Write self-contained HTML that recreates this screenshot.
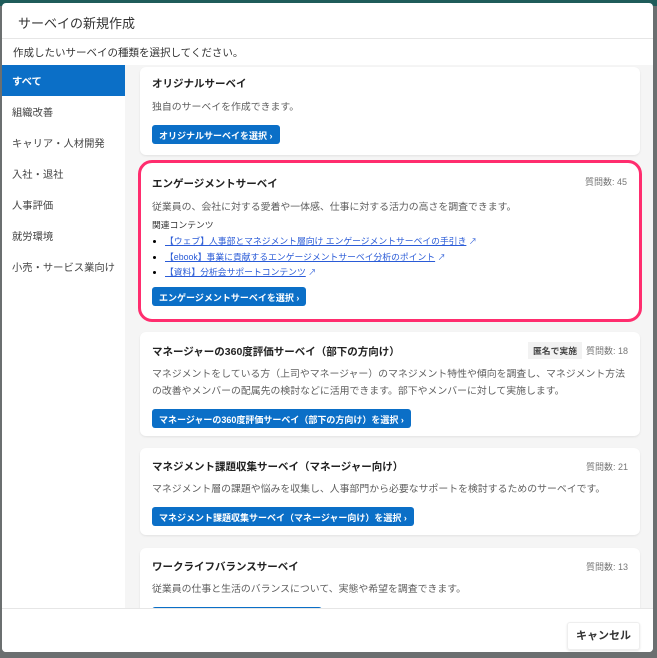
<!DOCTYPE html>
<html><head><meta charset="utf-8"><style>
*{box-sizing:border-box;margin:0;padding:0}
body{width:657px;height:658px;background:#6b6f70;font-family:"Liberation Sans","Noto Sans CJK JP",sans-serif;position:relative;overflow:hidden}
.topbar{position:absolute;left:0;top:0;width:657px;height:6px;background:#1f5c5a}
.modal{position:absolute;left:2px;top:3px;width:651px;height:649px;background:#fff;border-radius:4px;overflow:hidden}
.hdr{height:36px;border-bottom:1px solid #e6e6e6;padding:10px 16px;font-size:13px;color:#333}
.sub{position:absolute;top:37px;left:0;right:0;height:25px;padding:5px 11px;font-size:10.5px;color:#333}
.nav{position:absolute;left:0;top:62px;width:123px;height:543px;background:#fff}
.nav div{height:31px;padding:8px 10px;font-size:10.3px;color:#444;white-space:nowrap}
.nav .on{background:#0b6fc7;color:#fff;font-weight:bold;position:relative}
.nav .on:after{content:"";position:absolute;right:-5px;top:11px;border-left:5px solid #0b6fc7;border-top:5px solid transparent;border-bottom:5px solid transparent}
.main{position:absolute;left:123px;top:62px;width:528px;height:543px;background:#f5f5f5;overflow:hidden}
.card{position:absolute;left:15px;width:500px;background:#fff;border-radius:6px;box-shadow:0 1px 2px rgba(0,0,0,.08);padding:10px 12px}
.t{font-size:10.5px;font-weight:bold;color:#222;height:16px}
.q{position:absolute;right:12px;top:12px;font-size:9px;color:#777}
.d{font-size:9.9px;color:#5f5f5f;line-height:17px;margin-top:6px}
.btn{display:inline-block;background:#0b6fc7;color:#fff;font-size:9px;font-weight:bold;padding:4px 7px;border-radius:3px;margin-top:9px;height:19px;white-space:nowrap}
.hl{border:3px solid #ff2d6e;border-radius:14px;box-shadow:none}
.rel{font-size:8.8px;color:#333;margin-top:2px}
ul{margin-top:3px;padding-left:13px;font-size:8.8px;line-height:15.5px}
li a{color:#2a5bd7;text-decoration:underline}
li span{color:#2a5bd7;font-size:8px}
.foot{position:absolute;left:0;top:605px;width:651px;height:44px;background:#fff;border-top:1px solid #e6e6e6}
.cancel{position:absolute;right:13px;top:13px;width:73px;height:28px;border:1px solid #eee;border-radius:3px;box-shadow:0 1px 2px rgba(0,0,0,.1);font-size:11px;font-weight:bold;color:#333;text-align:center;line-height:26px}
.tag{position:absolute;right:58px;top:10px;font-size:8.8px;background:#f2f2f2;color:#444;padding:2px 5px;font-weight:bold}
</style></head><body>
<div class="topbar"></div>
<div class="modal">
<div class="hdr">サーベイの新規作成</div>
<div class="sub">作成したいサーベイの種類を選択してください。</div>
<div class="nav">
<div class="on">すべて</div><div>組織改善</div><div>キャリア・人材開発</div><div>入社・退社</div><div>人事評価</div><div>就労環境</div><div>小売・サービス業向け</div>
</div>
<div class="main">
<div class="card" style="top:2px;height:88px;padding-top:9px"><div class="t">オリジナルサーベイ</div><div class="d" style="margin-top:7px">独自のサーベイを作成できます。</div><div class="btn">オリジナルサーベイを選択 ›</div></div>
<div class="card hl" style="top:95px;height:162px;left:13px;width:504px;padding:13px 11px"><div class="t">エンゲージメントサーベイ</div><div class="q">質問数: 45</div><div class="d" style="margin-top:7px">従業員の、会社に対する愛着や一体感、仕事に対する活力の高さを調査できます。</div><div class="rel">関連コンテンツ</div>
<ul><li><a>【ウェブ】人事部とマネジメント層向け エンゲージメントサーベイの手引き</a> <span>↗</span></li><li><a>【ebook】事業に貢献するエンゲージメントサーベイ分析のポイント</a> <span>↗</span></li><li><a>【資料】分析会サポートコンテンツ</a> <span>↗</span></li></ul>
<div class="btn" style="margin-top:6px">エンゲージメントサーベイを選択 ›</div></div>
<div class="card" style="top:267px;height:104px;padding-top:12px"><div class="t">マネージャーの360度評価サーベイ（部下の方向け）</div><div class="tag">匿名で実施</div><div class="q">質問数: 18</div><div class="d">マネジメントをしている方（上司やマネージャー）のマネジメント特性や傾向を調査し、マネジメント方法の改善やメンバーの配属先の検討などに活用できます。部下やメンバーに対して実施します。</div><div class="btn">マネージャーの360度評価サーベイ（部下の方向け）を選択 ›</div></div>
<div class="card" style="top:383px;height:87px;padding-top:11px"><div class="t">マネジメント課題収集サーベイ（マネージャー向け）</div><div class="q">質問数: 21</div><div class="d">マネジメント層の課題や悩みを収集し、人事部門から必要なサポートを検討するためのサーベイです。</div><div class="btn">マネジメント課題収集サーベイ（マネージャー向け）を選択 ›</div></div>
<div class="card" style="top:483px;height:88px;padding-top:11px"><div class="t">ワークライフバランスサーベイ</div><div class="q">質問数: 13</div><div class="d">従業員の仕事と生活のバランスについて、実態や希望を調査できます。</div><div class="btn" style="width:170px"></div></div>
</div>
<div class="foot"><div class="cancel">キャンセル</div></div>
</div>
</body></html>
